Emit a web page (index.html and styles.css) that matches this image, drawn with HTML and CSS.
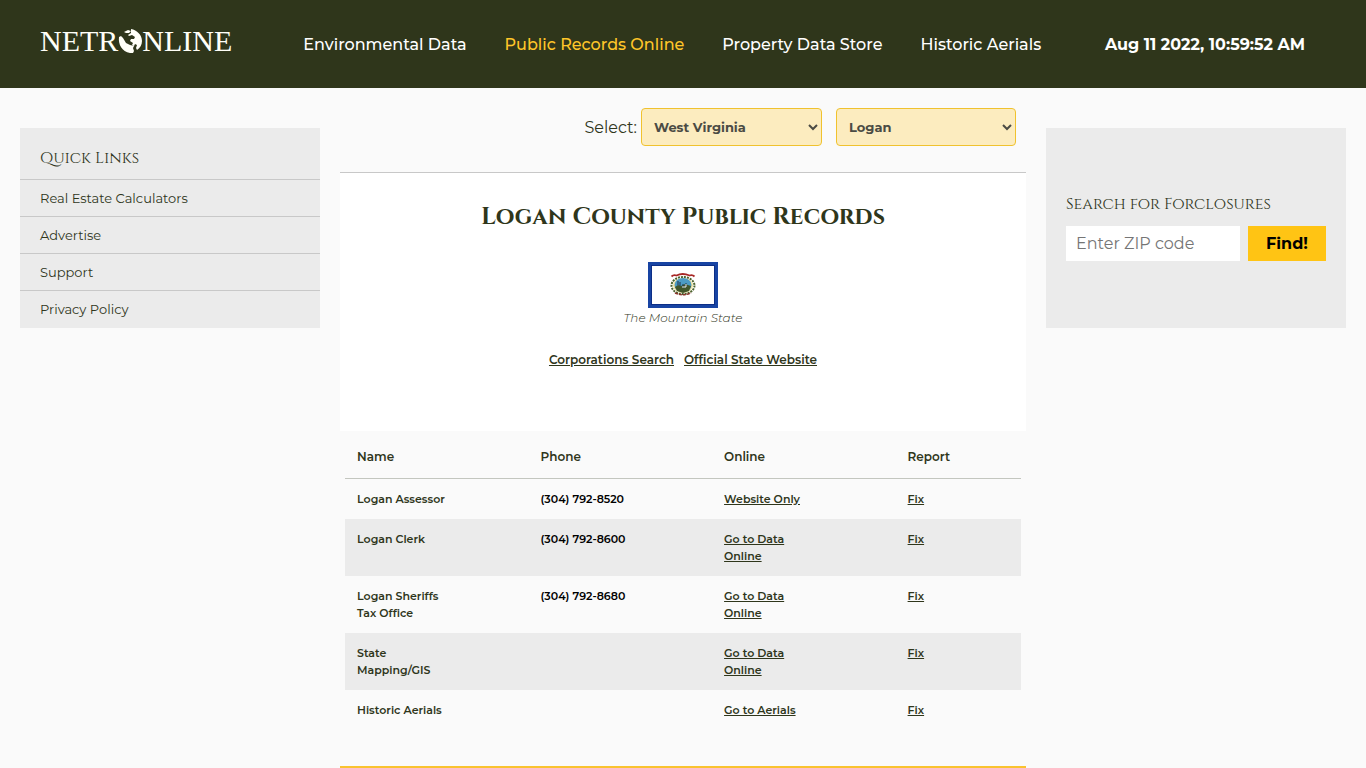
FILE: index.html
```html
<!DOCTYPE html>
<html lang="en">
<head>
<meta charset="utf-8">
<meta name="viewport" content="width=device-width, initial-scale=1">
<title>Logan County Public Records - NETROnline</title>
<link rel="stylesheet" href="styles.css">
</head>
<body>
<header class="topbar">
  <a class="logo" href="#" aria-label="NETROnline">
    <span>NETR</span>
    <svg class="globe" viewBox="0 0 24 24" aria-hidden="true">
      <path fill="#fffff8" d="M1 8C0 15 4 23 12 24h3l1-2-1-3 1-2-4-1-4-2-3-5-2-2zM13 0c6 1 11 6 11 12 0 4-2 7-5 9l-1-2 1-3-2-1-1 2-2-1 1-2-3-2 1-2 3 0 1-2-3-2-3 1-1-1 3-2zM6 3l4-2 3 1-2 2-3 0z"/>
    </svg>
    <span>NLINE</span>
  </a>
  <nav class="nav">
    <a href="#">Environmental Data</a>
    <a class="active" href="#">Public Records Online</a>
    <a href="#">Property Data Store</a>
    <a href="#">Historic Aerials</a>
  </nav>
  <time class="clock" datetime="2022-08-11T10:59:52">Aug 11 2022, 10:59:52 AM</time>
</header>
<div class="page">
  <aside class="side links">
    <h2>Quick Links</h2>
    <a href="#">Real Estate Calculators</a>
    <a href="#">Advertise</a>
    <a href="#">Support</a>
    <a href="#">Privacy Policy</a>
  </aside>
  <main class="main">
    <form class="pickers">
      <label for="state">Select:</label>
      <select id="state"><option>West Virginia</option></select>
      <select id="county" aria-label="County"><option>Logan</option></select>
    </form>
    <section class="intro">
      <h1>Logan County Public Records</h1>
      <svg class="flag" viewBox="0 0 70 46" role="img" aria-label="West Virginia flag">
        <rect width="70" height="46" fill="#1844a3"/>
        <rect x="3.5" y="3.5" width="63" height="39" fill="#fff" stroke="#0d2e86"/>
        <ellipse cx="35" cy="23.500" rx="11.500" ry="8.500" fill="none" stroke="#4c632f" stroke-width="2" stroke-dasharray="2 1"/>
        <ellipse cx="35" cy="23.500" rx="10" ry="7.500" fill="#efe3a0"/>
        <ellipse cx="35" cy="23" rx="8.500" ry="7" fill="#4c9bc5"/>
        <path d="M27 25l3-2 3 1 4-2 6 2-2 5-6 2-6-2z" fill="#41572c"/>
        <path d="M30 19v4m2-3v4m3-2v4m3-5v4" stroke="#1d3348"/>
        <path d="M34 25h4v-3" stroke="#eee" fill="none"/>
        <path d="M23.500 14.500q2-2 5-1 6-3 13 0 3-1 5 1" fill="none" stroke="#a82826" stroke-width="1.800"/>
        <path d="M27 31q8 3.500 16 0" fill="none" stroke="#8a332a" stroke-width="1.500" stroke-dasharray="3 1"/>
      </svg>
      <p class="motto">The Mountain State</p>
      <p class="state-links"><a href="#">Corporations Search</a><a href="#">Official State Website</a></p>
    </section>
    <div class="records">
      <table>
        <thead><tr><th>Name</th><th>Phone</th><th>Online</th><th>Report</th></tr></thead>
        <tbody>
          <tr><td>Logan Assessor</td><td class="phone">(304) 792-8520</td><td><a href="#">Website Only</a></td><td><a href="#">Fix</a></td></tr>
          <tr><td>Logan Clerk</td><td class="phone">(304) 792-8600</td><td><a href="#">Go to Data<br>Online</a></td><td><a href="#">Fix</a></td></tr>
          <tr><td>Logan Sheriffs<br>Tax Office</td><td class="phone">(304) 792-8680</td><td><a href="#">Go to Data<br>Online</a></td><td><a href="#">Fix</a></td></tr>
          <tr><td>State<br>Mapping/GIS</td><td></td><td><a href="#">Go to Data<br>Online</a></td><td><a href="#">Fix</a></td></tr>
          <tr><td>Historic Aerials</td><td></td><td><a href="#">Go to Aerials</a></td><td><a href="#">Fix</a></td></tr>
        </tbody>
      </table>
    </div>
  </main>
  <aside class="side search">
    <form>
      <h2><label for="zip">Search for Forclosures</label></h2>
      <div class="search-row">
        <input id="zip" type="text" placeholder="Enter ZIP code">
        <button type="button">Find!</button>
      </div>
    </form>
  </aside>
</div>
</body>
</html>
```
FILE: styles.css
```css
* { box-sizing: border-box; }
body {
  margin: 0;
  background: #fafafa;
  color: #2f361b;
  font-family: Montserrat, Inter, "Open Sans", sans-serif;
  font-size: 16px;
}
a { color: inherit; }
h1, h2, p { margin: 0; }
h1, h2 { font-family: Cinzel, "Liberation Serif", serif; }
.topbar {
  display: flex;
  align-items: center;
  height: 88px;
  padding: 0 61px 0 40px;
  background: #2f361b;
  color: #fff;
}
.logo {
  display: flex;
  align-items: center;
  padding-bottom: 7px;
  color: #fffff8;
  font: 30px/34px "Liberation Serif", serif;
  text-decoration: none;
}
.globe { width: 24px; height: 24px; }
.nav {
  display: flex;
  gap: 38px;
  margin-left: 71px;
  font-size: 16px;
  font-weight: 500;
  white-space: nowrap;
}
.nav a { text-decoration: none; }
.nav .active { color: #ffc629; }
.clock {
  margin-left: auto;
  font-size: 16px;
  font-weight: 700;
  white-space: nowrap;
}
.page {
  display: grid;
  grid-template-columns: 300px 1fr 300px;
  gap: 20px;
  padding: 0 20px;
  align-items: start;
}
.side {
  min-height: 200px;
  margin-top: 40px;
  background: #ebebeb;
}
.side h2 {
  font-size: 16px;
  line-height: 20px;
  font-weight: 400;
}
.links h2 { padding: 20px 20px 11px; }
.links a {
  display: block;
  padding: 8px 20px;
  border-top: 1px solid #c8c8c8;
  font-size: 13px;
  line-height: 20px;
  font-weight: 400;
  text-decoration: none;
}
.search {
  display: flex;
  align-items: center;
  padding: 0 20px;
}
.search form { width: 100%; padding-bottom: 2px; }
.search-row {
  display: flex;
  gap: 8px;
  margin-top: 12px;
}
.search input, .search button {
  height: 35px;
  border: 0;
  border-radius: 0;
  font-family: inherit;
  font-size: 16px;
}
.search input {
  flex: 1;
  min-width: 0;
  padding: 0 10px;
  background: #fff;
}
.search input::placeholder { color: #757575; }
.search button {
  width: 78px;
  padding: 0;
  background: #ffc414;
  color: #000;
  font-weight: 700;
}
.pickers {
  display: flex;
  justify-content: flex-end;
  align-items: center;
  height: 84px;
  padding: 0 10px 6px;
  font-weight: 400;
}
.pickers select {
  width: 181px;
  height: 38px;
  margin-left: 4px;
  padding: 0 8px;
  border: 1px solid #f0c22e;
  border-radius: 4px;
  background: #fcecbf;
  color: #4b4b44;
  font-family: inherit;
  font-size: 13px;
  font-weight: 700;
}
.pickers select + select { width: 180px; margin-left: 14px; }
.intro {
  display: flex;
  flex-direction: column;
  align-items: center;
  min-height: 259px;
  padding-top: 28px;
  border-top: 1px solid #c8c8c8;
  background: #fff;
}
.intro h1 {
  font-size: 24px;
  line-height: 32px;
  font-weight: 600;
}
.flag {
  width: 70px;
  height: 46px;
  margin-top: 29px;
}
.motto {
  font-size: 12px;
  line-height: 20px;
  font-weight: 300;
  font-style: italic;
}
.state-links {
  display: flex;
  gap: 10px;
  margin-top: 22px;
  font-size: 12px;
  line-height: 20px;
  font-weight: 600;
}
.records {
  padding: 0 5px 36px;
  border-bottom: 2px solid #f9c32f;
}
table {
  width: 100%;
  border-collapse: collapse;
  table-layout: fixed;
  font-size: 11px;
  line-height: 17px;
  font-weight: 600;
  text-align: left;
}
th {
  width: 27.150%;
  padding: 17px 12px 12px;
  border-bottom: 1px solid #c3c6bf;
  font-size: 12px;
  line-height: 18px;
  font-weight: 600;
}
th:last-child { width: auto; }
td { padding: 12px 12px 11px; vertical-align: top; }
tbody tr:nth-child(even) { background: #ebebeb; }
.phone { color: #000; }
```
